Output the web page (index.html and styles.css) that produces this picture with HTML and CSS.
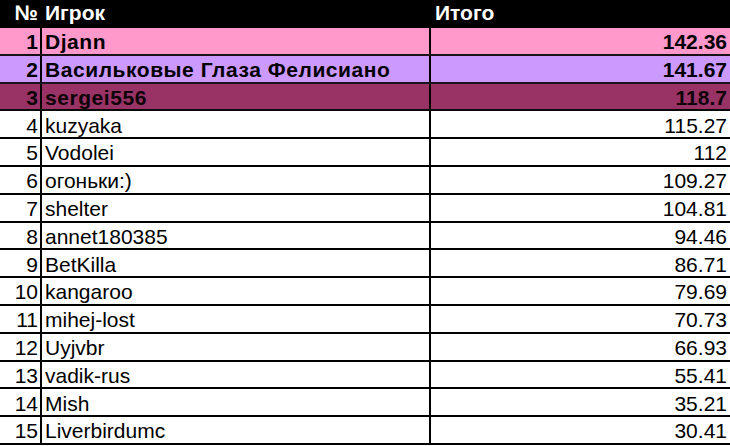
FILE: index.html
```html
<!DOCTYPE html>
<html lang="ru">
<head>
<meta charset="utf-8">
<link rel="stylesheet" href="styles.css">
</head>
<body>
<div class="sheet">
  <div class="row head">
    <div class="c num">№</div>
    <div class="c name">Игрок</div>
    <div class="c total">Итого</div>
  </div>
  <div class="row bold pink"><div class="c num">1</div><div class="c name">Djann</div><div class="c total">142.36</div></div>
  <div class="row bold violet"><div class="c num">2</div><div class="c name">Васильковые Глаза Фелисиано</div><div class="c total">141.67</div></div>
  <div class="row bold plum"><div class="c num">3</div><div class="c name">sergei556</div><div class="c total">118.7</div></div>
  <div class="row"><div class="c num">4</div><div class="c name">kuzyaka</div><div class="c total">115.27</div></div>
  <div class="row"><div class="c num">5</div><div class="c name">Vodolei</div><div class="c total">112</div></div>
  <div class="row"><div class="c num">6</div><div class="c name">огоньки:)</div><div class="c total">109.27</div></div>
  <div class="row"><div class="c num">7</div><div class="c name">shelter</div><div class="c total">104.81</div></div>
  <div class="row"><div class="c num">8</div><div class="c name">annet180385</div><div class="c total">94.46</div></div>
  <div class="row"><div class="c num">9</div><div class="c name">BetKilla</div><div class="c total">86.71</div></div>
  <div class="row"><div class="c num">10</div><div class="c name">kangaroo</div><div class="c total">79.69</div></div>
  <div class="row"><div class="c num">11</div><div class="c name">mihej-lost</div><div class="c total">70.73</div></div>
  <div class="row"><div class="c num">12</div><div class="c name">Uyjvbr</div><div class="c total">66.93</div></div>
  <div class="row"><div class="c num">13</div><div class="c name">vadik-rus</div><div class="c total">55.41</div></div>
  <div class="row"><div class="c num">14</div><div class="c name">Mish</div><div class="c total">35.21</div></div>
  <div class="row"><div class="c num">15</div><div class="c name">Liverbirdumc</div><div class="c total">30.41</div></div>
</div>
</body>
</html>
```
FILE: styles.css
```css
html, body {
  margin: 0;
  padding: 0;
  background: #ffffff;
}
.sheet {
  width: 730px;
  height: 446px;
  overflow: hidden;
  display: grid;
  grid-template-rows: 28px;
  grid-auto-rows: 27.8px;
  font-family: "Liberation Sans", Arial, sans-serif;
  font-size: 21px;
  color: #000;
}
.row {
  display: grid;
  grid-template-columns: 42px 389px 1fr;
  border-bottom: 2px solid #000;
  box-sizing: border-box;
}
.c {
  display: flex;
  align-items: flex-end;
  line-height: 18px;
  padding-bottom: 2.5px;
  white-space: nowrap;
  overflow: hidden;
}
.num {
  justify-content: flex-end;
  padding-right: 2px;
  border-right: 2px solid #000;
}
.name {
  padding-left: 3px;
  border-right: 2px solid #000;
}
.total {
  justify-content: flex-end;
  padding-right: 3px;
}
.head {
  background: #000;
  color: #fff;
  font-weight: bold;
  border-bottom: 0;
}
.head .c {
  align-items: flex-start;
  padding-top: 4px;
  padding-bottom: 0;
}
.head .total {
  justify-content: flex-start;
  padding-left: 4px;
}
.bold { font-weight: bold; }
.bold .name { letter-spacing: 0.55px; }
.pink { background: #ff99cc; border-bottom-color: #1a1016; }
.violet { background: #cc99ff; border-bottom-color: #1a1420; }
.plum { background: #993366; color: #0d0208; border-bottom-color: #0a0a0a; }
```
